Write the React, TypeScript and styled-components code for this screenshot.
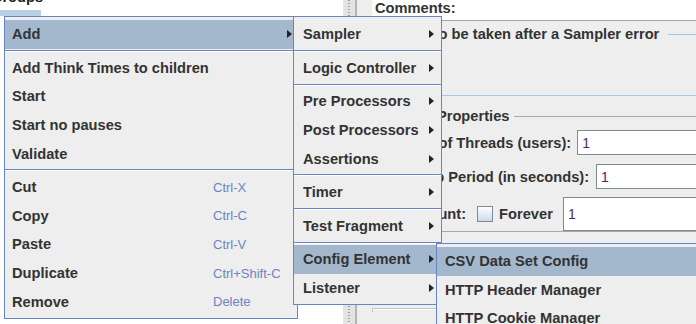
import React from "react";
import styled, { createGlobalStyle } from "styled-components";

const GlobalStyle = createGlobalStyle`
  html, body {
    margin: 0;
    padding: 0;
    background: #ffffff;
  }
  body {
    font-family: "Liberation Sans", Arial, sans-serif;
    overflow: hidden;
  }
`;

const Window = styled.div`
  position: relative;
  display: flex;
  width: 696px;
  height: 324px;
  overflow: hidden;
  background: #eeeeee;
  color: #333333;
  font-size: 11pt;
`;

/* ---- left: test plan tree ---- */

const TreePane = styled.div`
  width: 343px;
  flex-shrink: 0;
  background: #ffffff;
  overflow: hidden;
`;

const TreeLabel = styled.div`
  margin: -12px 0 0 -9px;
  height: 18px;
  line-height: 18px;
  font-weight: bold;
  color: #222222;
  white-space: nowrap;
`;

const TreeSelection = styled.div`
  width: 41px;
  height: 6px;
  margin-top: 4px;
  background: #b9cfe6;
`;

const Splitter = styled.div`
  width: 14px;
  flex-shrink: 0;
  box-sizing: border-box;
  display: flex;
  justify-content: center;
  background: #e4e4e4;
  border-right: 2px solid #b4b4b4;

  &::after {
    content: "";
    width: 2px;
    background: repeating-linear-gradient(#9c9c9c 0 1px, transparent 1px 3px);
  }
`;

/* ---- right: thread group editor ---- */

const Editor = styled.div`
  flex: 1;
  min-width: 0;
  display: flex;
  flex-direction: column;
  padding-left: 15px;
`;

const CommentsBar = styled.div`
  height: 20px;
  padding-left: 3px;
  line-height: 17px;
  font-weight: bold;
  background: #ffffff;
  border-bottom: 1px solid #a4a4a4;
`;

const TitledBox = styled.fieldset<{ $tone: "blue" | "grey"; $top: number }>`
  margin: ${(p) => p.$top}px -30px 0 0;
  padding: 0 0 0 6px;
  min-width: 0;
  border: 1px solid ${(p) => (p.$tone === "blue" ? "#aac4e2" : "#a8a8a8")};
`;

const Title = styled.legend<{ $after: number }>`
  margin-left: 2px;
  padding: 0 ${(p) => p.$after}px 0 3px;
  line-height: 17px;
  font-weight: bold;
  white-space: nowrap;
`;

const ActionBody = styled.div`
  height: 52px;
`;

const FieldRow = styled.div<{ $top: number; $gap: number }>`
  display: flex;
  align-items: center;
  margin-top: ${(p) => p.$top}px;
  gap: ${(p) => p.$gap}px;
`;

const FieldLabel = styled.span`
  font-weight: bold;
  white-space: nowrap;
`;

const TextField = styled.input<{ $h: number; $lead?: number }>`
  flex: 1;
  min-width: 0;
  box-sizing: border-box;
  height: ${(p) => p.$h}px;
  margin: 0 0 0 ${(p) => p.$lead ?? 0}px;
  padding: 0 0 0 4px;
  border: 1px solid #7a8a99;
  background: #ffffff;
  color: #4b2a5e;
  font-family: "Liberation Sans", Arial, sans-serif;
  font-size: 14px;
  outline: none;
`;

const CheckBox = styled.span`
  width: 16px;
  height: 16px;
  box-sizing: border-box;
  border: 1px solid #7a8a99;
  background: linear-gradient(#ffffff, #cbd9ea);
  margin-left: 5px;
`;

const BottomBox = styled.div`
  margin: 76px -30px 0 0;
  height: 3px;
  border-top: 1px solid #c4c4c4;
  border-left: 1px solid #c4c4c4;
  box-shadow: inset 0 1px 0 #ffffff;
`;

/* ---- popup menus ---- */

const Popup = styled.div<{ $left: number; $top: number; $width: number; $z: number }>`
  position: absolute;
  left: ${(p) => p.$left}px;
  top: ${(p) => p.$top}px;
  width: ${(p) => p.$width}px;
  z-index: ${(p) => p.$z};
  box-sizing: border-box;
  padding: 3px 0 2px;
  background: #eeeeee;
  border: 1px solid #6a84c0;
`;

const Item = styled.div<{ $active?: boolean; $inset: number; $end: number }>`
  display: flex;
  align-items: center;
  height: 28.6px;
  padding: 0 ${(p) => p.$end}px 0 ${(p) => p.$inset}px;
  background: ${(p) => (p.$active ? "#a3b8cc" : "transparent")};
  color: #333333;
  font-size: 11pt;
  font-weight: bold;
  white-space: nowrap;
`;

const ItemLabel = styled.span`
  flex: 1;
`;

const Shortcut = styled.span`
  width: 79px;
  font-size: 13px;
  font-weight: normal;
  color: #6d83c2;
`;

const Arrow = styled.span`
  width: 0;
  height: 0;
  border-left: 5px solid #222222;
  border-top: 4px solid transparent;
  border-bottom: 4px solid transparent;
`;

const Separator = styled.div`
  height: 5px;
  display: flex;
  flex-direction: column;
  justify-content: center;

  &::before {
    content: "";
    border-top: 1px solid #6a84c0;
    border-bottom: 1px solid #ffffff;
  }
`;

type Entry = { label?: string; key?: string; sub?: boolean; active?: boolean; sep?: boolean };

const mainMenu: Entry[] = [
  { label: "Add", sub: true, active: true },
  { sep: true },
  { label: "Add Think Times to children" },
  { label: "Start" },
  { label: "Start no pauses" },
  { label: "Validate" },
  { sep: true },
  { label: "Cut", key: "Ctrl-X" },
  { label: "Copy", key: "Ctrl-C" },
  { label: "Paste", key: "Ctrl-V" },
  { label: "Duplicate", key: "Ctrl+Shift-C" },
  { label: "Remove", key: "Delete" },
];

const addMenu: Entry[] = [
  { label: "Sampler", sub: true },
  { sep: true },
  { label: "Logic Controller", sub: true },
  { sep: true },
  { label: "Pre Processors", sub: true },
  { label: "Post Processors", sub: true },
  { label: "Assertions", sub: true },
  { sep: true },
  { label: "Timer", sub: true },
  { sep: true },
  { label: "Test Fragment", sub: true },
  { sep: true },
  { label: "Config Element", sub: true, active: true },
  { label: "Listener", sub: true },
];

const configMenu: Entry[] = [
  { label: "CSV Data Set Config", active: true },
  { label: "HTTP Header Manager" },
  { label: "HTTP Cookie Manager" },
  { label: "HTTP Cache Manager" },
];

function Menu({
  entries,
  left,
  top,
  width,
  z,
  inset,
  end,
}: {
  entries: Entry[];
  left: number;
  top: number;
  width: number;
  z: number;
  inset: number;
  end: number;
}) {
  return (
    <Popup $left={left} $top={top} $width={width} $z={z}>
      {entries.map((e, i) =>
        e.sep ? (
          <Separator key={i} />
        ) : (
          <Item key={i} $active={e.active} $inset={inset} $end={end}>
            <ItemLabel>{e.label}</ItemLabel>
            {e.key && <Shortcut>{e.key}</Shortcut>}
            {e.sub && <Arrow />}
          </Item>
        )
      )}
    </Popup>
  );
}

export default function App() {
  return (
    <>
      <GlobalStyle />
      <Window>
        <TreePane>
          <TreeLabel>Groups</TreeLabel>
          <TreeSelection />
        </TreePane>
        <Splitter />
        <Editor>
          <CommentsBar>Comments:</CommentsBar>
          <TitledBox $tone="blue" $top={5}>
            <Title $after={9}>Action to be taken after a Sampler error</Title>
            <ActionBody />
          </TitledBox>
          <TitledBox $tone="grey" $top={12}>
            <Title $after={5}>Thread Properties</Title>
            <FieldRow $top={5} $gap={6}>
              <FieldLabel>Number of Threads (users):</FieldLabel>
              <TextField $h={25} readOnly value="1" />
            </FieldRow>
            <FieldRow $top={9} $gap={7}>
              <FieldLabel>Ramp-Up Period (in seconds):</FieldLabel>
              <TextField $h={25} readOnly value="1" />
            </FieldRow>
            <FieldRow $top={8} $gap={6}>
              <FieldLabel>Loop Count:</FieldLabel>
              <CheckBox />
              <FieldLabel>Forever</FieldLabel>
              <TextField $h={34} $lead={4} readOnly value="1" />
            </FieldRow>
          </TitledBox>
          <BottomBox />
        </Editor>

        <Menu entries={mainMenu} left={4} top={16} width={294} z={1} inset={7} end={5} />
        <Menu entries={addMenu} left={293} top={16} width={149} z={2} inset={9} end={7} />
        <Menu entries={configMenu} left={436} top={243} width={290} z={3} inset={8} end={8} />
      </Window>
    </>
  );
}
